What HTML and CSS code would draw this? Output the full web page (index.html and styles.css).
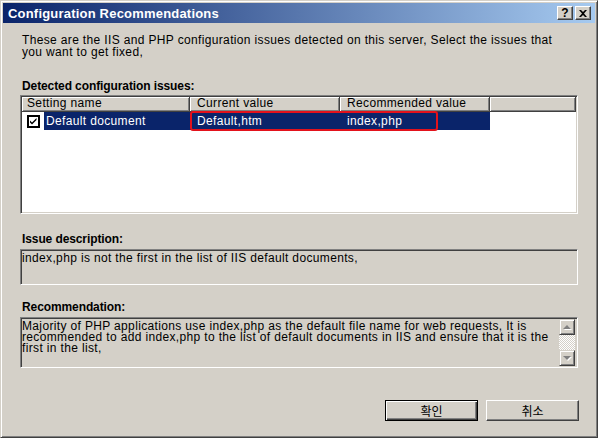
FILE: index.html
```html
<!DOCTYPE html>
<html lang="en">
<head>
    <meta charset="UTF-8">
    <title>Configuration Recommendations</title>
    <link rel="stylesheet" href="styles.css">
</head>
<body>
    <div class="window">
        <div class="titlebar">
            <span class="title">Configuration Recommendations</span>
            <div class="title-btns">
                <span class="tbtn help">?</span>
                <span class="tbtn close">
                    <svg width="8" height="7" viewBox="0 0 8 7"><path d="M0 0h2l2 2 2-2h2L5 3.5 8 7H6L4 5 2 7H0l3-3.5z" fill="#000"/></svg>
                </span>
            </div>
        </div>
        <div class="content">
            <p class="intro">These are the IIS and PHP configuration issues detected on this server, Select the issues that<br>you want to get fixed,</p>

            <h3 class="label label-first">Detected configuration issues:</h3>
            <div class="listview">
                <div class="list-head">
                    <div class="head-cell col-name">Setting name</div>
                    <div class="head-cell col-cur">Current value</div>
                    <div class="head-cell col-rec">Recommended value</div>
                    <div class="head-cell col-rest"></div>
                </div>
                <div class="list-row">
                    <span class="check">
                        <svg width="9" height="9" viewBox="0 0 9 9"><path d="M1 3.5l2 2 4.5-4.5v2L3 7.5l-2-2z" fill="#000"/></svg>
                    </span>
                    <div class="row-sel">
                        <span class="cell-name">Default document</span>
                        <span class="cell-cur">Default,htm</span>
                        <span class="cell-rec">index,php</span>
                    </div>
                </div>
                <div class="mark"></div>
            </div>

            <h3 class="label label-issue">Issue description:</h3>
            <div class="textbox issue">index,php is not the first in the list of IIS default documents,</div>

            <h3 class="label label-rec">Recommendation:</h3>
            <div class="textbox rec">
                <div class="rec-text">Majority of PHP applications use index,php as the default file name for web requests, It is<br>recommended to add index,php to the list of default documents in IIS and ensure that it is the<br>first in the list,</div>
                <div class="scrollbar">
                    <span class="sbtn"><span class="arrow up"></span></span>
                    <span class="track"></span>
                    <span class="sbtn"><span class="arrow down"></span></span>
                </div>
            </div>

            <div class="buttons">
                <button class="btn default">확인</button>
                <button class="btn">취소</button>
            </div>
        </div>
    </div>
</body>
</html>
```

FILE: styles.css
```css
*{
    margin: 0;
    padding: 0;
    box-sizing: border-box;
}
body{
    width: 598px;
    height: 438px;
    overflow: hidden;
    background: #d4d0c8;
    font-family: "Liberation Sans", "Noto Sans CJK KR", sans-serif;
    font-size: 12px;
    letter-spacing: 0.35px;
    color: #000;
}
.window{
    width: 598px;
    height: 438px;
    border: 1px solid;
    border-color: #d4d0c8 #404040 #404040 #d4d0c8;
    box-shadow: inset 1px 1px #fff, inset -1px -1px #808080;
    padding: 2px;
}
.titlebar{
    height: 20px;
    display: flex;
    align-items: center;
    justify-content: space-between;
    padding: 0 4px 0 5px;
    background: linear-gradient(to right, #0a246a, #a6caf0);
}
.title{
    color: #fff;
    font-weight: bold;
    font-size: 13px;
    letter-spacing: 0.2px;
}
.title-btns{
    display: flex;
    gap: 2px;
}
.tbtn{
    width: 16px;
    height: 14px;
    background: #d4d0c8;
    border: 1px solid;
    border-color: #fff #404040 #404040 #fff;
    box-shadow: inset -1px -1px #808080;
    display: flex;
    align-items: center;
    justify-content: center;
    font-weight: bold;
    font-size: 12px;
    line-height: 12px;
    letter-spacing: 0;
}
.content{
    padding: 0 17px;
}
.intro{
    margin-top: 11px;
    padding-left: 2px;
    line-height: 12px;
    white-space: nowrap;
}
.label{
    font-size: 12px;
    font-weight: bold;
    line-height: 12px;
    padding-left: 2px;
    letter-spacing: -0.1px;
}
.label-first{
    margin-top: 22px;
}
.label-issue{
    margin-top: 19px;
}
.label-rec{
    margin-top: 16px;
}
.listview{
    position: relative;
    margin-top: 3px;
    height: 119px;
    background: #fff;
    border: 1px solid;
    border-color: #808080 #fff #fff #808080;
    box-shadow: inset 1px 1px #404040, inset -1px -1px #d4d0c8;
    padding: 1px;
}
.list-head{
    display: flex;
    height: 15px;
}
.head-cell{
    height: 15px;
    background: #d4d0c8;
    border-right: 1px solid #404040;
    border-bottom: 1px solid #404040;
    box-shadow: inset 1px 1px #fff, inset -1px -1px #808080;
    padding-left: 5px;
    line-height: 13px;
    white-space: nowrap;
}
.col-name{
    width: 168px;
}
.col-cur{
    width: 150px;
    padding-left: 7px;
}
.col-rec{
    width: 150px;
    padding-left: 7px;
}
.col-rest{
    flex: 1;
}
.list-row{
    display: flex;
    align-items: center;
    height: 18px;
}
.check{
    width: 13px;
    height: 13px;
    margin-left: 5px;
    margin-right: 4px;
    border: 2px solid #000;
    background: #fff;
    display: flex;
    align-items: center;
    justify-content: center;
}
.row-sel{
    display: flex;
    height: 18px;
    align-items: center;
    background: #0a246a;
    color: #fff;
}
.cell-name{
    width: 146px;
    padding-left: 2px;
}
.cell-cur{
    width: 150px;
    padding-left: 7px;
}
.cell-rec{
    width: 150px;
    padding-left: 7px;
}
.mark{
    position: absolute;
    left: 169px;
    top: 15px;
    width: 248px;
    height: 20px;
    border: 2px solid #e3121b;
    border-radius: 3px;
}
.textbox{
    margin-top: 4px;
    border: 1px solid;
    border-color: #808080 #fff #fff #808080;
    box-shadow: inset 1px 1px #404040, inset -1px -1px #d4d0c8;
    padding: 2px 1px 0;
}
.issue{
    height: 36px;
    line-height: 12px;
    padding-top: 2px;
}
.rec{
    height: 51px;
    display: flex;
    justify-content: space-between;
    padding: 1px 2px 1px 1px;
}
.rec-text{
    line-height: 11px;
    padding-top: 2px;
    white-space: nowrap;
}
.scrollbar{
    width: 16px;
    display: flex;
    flex-direction: column;
}
.sbtn{
    height: 16px;
    background: #d4d0c8;
    border: 1px solid;
    border-color: #d4d0c8 #404040 #404040 #d4d0c8;
    box-shadow: inset 1px 1px #fff, inset -1px -1px #808080;
    display: flex;
    align-items: center;
    justify-content: center;
}
.track{
    flex: 1;
    background: repeating-conic-gradient(#fff 0 25%, #d4d0c8 0 50%) 0 0 / 2px 2px;
}
.arrow{
    width: 0;
    height: 0;
    border-left: 4px solid transparent;
    border-right: 4px solid transparent;
    filter: drop-shadow(1px 1px 0 #fff);
}
.arrow.up{
    border-bottom: 4px solid #808080;
}
.arrow.down{
    border-top: 4px solid #808080;
}
.buttons{
    display: flex;
    justify-content: flex-end;
    gap: 8px;
    margin-top: 32px;
    margin-right: -1px;
}
.btn{
    width: 93px;
    height: 21px;
    background: #d4d0c8;
    border: 1px solid;
    border-color: #fff #404040 #404040 #fff;
    box-shadow: inset -1px -1px #808080;
    font-family: "Noto Sans CJK KR", sans-serif;
    font-size: 12px;
    line-height: 17px;
    letter-spacing: 0;
    color: #000;
}
.btn.default{
    border: 1px solid #000;
    box-shadow: inset 1px 1px #fff, inset -1px -1px #404040, inset -2px -2px #808080;
}
```
